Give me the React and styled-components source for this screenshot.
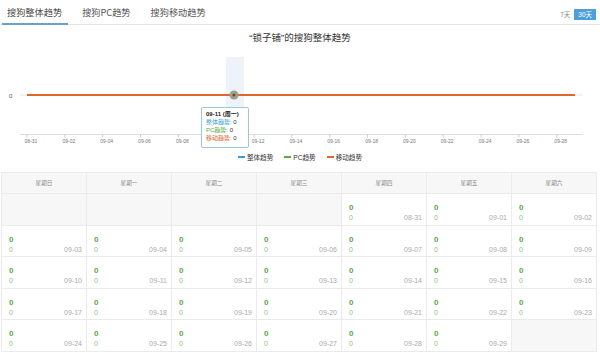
import styled, { createGlobalStyle } from "styled-components";

const GlobalStyle = createGlobalStyle`
  html, body {
    margin: 0;
    padding: 0;
    background: #fff;
    overflow: hidden;
  }
  body {
    font-family: "Liberation Sans", "Noto Sans CJK SC", sans-serif;
    color: #333;
  }
`;

const WEEK = ["星期日", "星期一", "星期二", "星期三", "星期四", "星期五", "星期六"];

const buildDays = () => {
  const cells = [null, null, null, null, "08-31"];
  for (let d = 1; d <= 29; d++) cells.push("09-" + String(d).padStart(2, "0"));
  cells.push(null);
  return cells;
};

const TICKS = (() => {
  const out = ["08-31"];
  for (let d = 2; d <= 28; d += 2) out.push("09-" + String(d).padStart(2, "0"));
  return out;
})();

const App = () => {
  const days = buildDays();

  return (
    <Page>
      <GlobalStyle />
      <TabBar>
        <Tab $active>搜狗整体趋势</Tab>
        <Tab>搜狗PC趋势</Tab>
        <Tab>搜狗移动趋势</Tab>
        <RangeSwitch>
          <RangeButton>7天</RangeButton>
          <RangeButton $active>30天</RangeButton>
        </RangeSwitch>
      </TabBar>

      <ChartSection>
        <ChartTitle>“锁子铺”的搜狗整体趋势</ChartTitle>
        <svg width="600" height="97" viewBox="0 51 600 97">
          <rect x="226" y="57" width="18" height="77" fill="#eef3f9" />
          <line x1="20" y1="95" x2="583" y2="95" stroke="#e6e6e6" strokeWidth="1" />
          <line x1="20" y1="134.5" x2="583" y2="134.5" stroke="#dcdcdc" strokeWidth="1" />
          <text x="9" y="97.5" fontSize="6" fill="#555">0</text>
          {TICKS.map((t, i) => {
            const x = 27 + i * 37.84;
            return (
              <g key={t}>
                <line x1={x} y1="134.5" x2={x} y2="137.5" stroke="#ccc" strokeWidth="1" />
                <text x={x + 4} y="143" fontSize="5" fill="#777" textAnchor="middle">
                  {t}
                </text>
              </g>
            );
          })}
          <line x1="27" y1="95" x2="575" y2="95" stroke="#3a9bd5" strokeWidth="2" />
          <line x1="27" y1="95" x2="575" y2="95" stroke="#59ab45" strokeWidth="2" />
          <line x1="27" y1="95" x2="575" y2="95" stroke="#e0652f" strokeWidth="2" />
          <circle cx="234" cy="95" r="4.5" fill="#a59e86" />
          <circle cx="234" cy="95" r="1.6" fill="#5c5448" />
        </svg>
        <Tooltip>
          <TipTitle>09-11 (周一)</TipTitle>
          <TipLine $color="#3a9bd5">整体趋势: <span>0</span></TipLine>
          <TipLine $color="#59ab45">PC趋势: <span>0</span></TipLine>
          <TipLine $color="#e0652f">移动趋势: <span>0</span></TipLine>
        </Tooltip>
        <Legend>
          <LegendItem $color="#3a9bd5">整体趋势</LegendItem>
          <LegendItem $color="#59ab45">PC趋势</LegendItem>
          <LegendItem $color="#e0652f">移动趋势</LegendItem>
        </Legend>
      </ChartSection>

      <Calendar>
        {WEEK.map((w) => (
          <HeadCell key={w}>{w}</HeadCell>
        ))}
        {days.map((d, i) =>
          d ? (
            <DayCell key={i}>
              <Total>0</Total>
              <SubRow>
                <span>0</span>
                <DateText>{d}</DateText>
              </SubRow>
            </DayCell>
          ) : (
            <EmptyCell key={i} />
          )
        )}
      </Calendar>
    </Page>
  );
};

export default App;

const Page = styled.div`
  width: 600px;
  height: 355px;
  overflow: hidden;
`;

const TabBar = styled.div`
  display: flex;
  align-items: flex-start;
  gap: 9px;
  height: 25px;
  box-sizing: border-box;
  padding-left: 2px;
  border-bottom: 1px solid #e4e4e4;
`;

const Tab = styled.div`
  box-sizing: border-box;
  height: 25px;
  padding: 5px 6px 0 5px;
  font-size: 9.2px;
  line-height: 14px;
  color: ${(p) => (p.$active ? "#4a4a4a" : "#555")};
  border-bottom: 2px solid ${(p) => (p.$active ? "#6b9fd0" : "transparent")};
  font-family: "Noto Sans CJK SC", sans-serif;
  white-space: nowrap;
`;

const RangeSwitch = styled.div`
  margin-left: auto;
  margin-right: 4px;
  margin-top: 9px;
  display: flex;
  align-items: center;
  gap: 2px;
`;

const RangeButton = styled.div`
  height: 11px;
  line-height: 11px;
  padding: 0 ${(p) => (p.$active ? "4px" : "2px")};
  font-size: 6.5px;
  font-family: "Liberation Sans", "Noto Sans CJK SC", sans-serif;
  color: ${(p) => (p.$active ? "#fff" : "#888")};
  background: ${(p) => (p.$active ? "#4d9fdc" : "transparent")};
`;

const ChartSection = styled.div`
  position: relative;
  height: 147px;

  svg {
    display: block;
    font-family: "Liberation Sans", sans-serif;
  }
`;

const ChartTitle = styled.div`
  height: 26px;
  line-height: 26px;
  text-align: center;
  font-size: 9.5px;
  color: #333;
`;

const Tooltip = styled.div`
  position: absolute;
  left: 201px;
  top: 82px;
  width: 48px;
  height: 41px;
  box-sizing: border-box;
  padding: 2px 0 0 4px;
  background: rgba(255, 255, 255, 0.94);
  border: 1px solid #9fc7dc;
  border-radius: 2px;
  font-size: 6px;
  line-height: 8px;
`;

const TipTitle = styled.div`
  font-weight: bold;
  color: #222;
`;

const TipLine = styled.div`
  color: ${(p) => p.$color};
  span {
    color: #333;
  }
`;

const Legend = styled.div`
  display: flex;
  justify-content: center;
  gap: 11px;
  height: 14px;
  margin-top: 2px;
  align-items: center;
`;

const LegendItem = styled.div`
  display: flex;
  align-items: center;
  gap: 2px;
  font-size: 6.6px;
  color: #333;
  &::before {
    content: "";
    width: 7px;
    height: 1.5px;
    background: ${(p) => p.$color};
  }
`;

const Calendar = styled.div`
  display: grid;
  grid-template-columns: repeat(7, 85px);
  grid-template-rows: 21px 32px 31px 32px 31px 32px;
  width: 596px;
  margin: 0 0 0 1px;
  box-sizing: border-box;
  border-top: 1px solid #ebebeb;
  border-left: 1px solid #ebebeb;
`;

const CellBase = styled.div`
  border-right: 1px solid #ebebeb;
  border-bottom: 1px solid #ebebeb;
  box-sizing: border-box;
`;

const HeadCell = styled(CellBase)`
  background: #f7f7f7;
  text-align: center;
  line-height: 20px;
  font-size: 5.6px;
  color: #888;
`;

const EmptyCell = styled(CellBase)`
  background: #f7f7f7;
`;

const DayCell = styled(CellBase)`
  background: #fff;
  padding: 9px 4px 0 7px;
`;

const Total = styled.div`
  font-size: 8px;
  line-height: 9px;
  font-weight: bold;
  color: #5aa848;
`;

const SubRow = styled.div`
  display: flex;
  justify-content: space-between;
  margin-top: 2px;
  font-size: 7px;
  line-height: 8px;
  color: #8ec47c;
`;

const DateText = styled.span`
  color: #aaa;
`;
